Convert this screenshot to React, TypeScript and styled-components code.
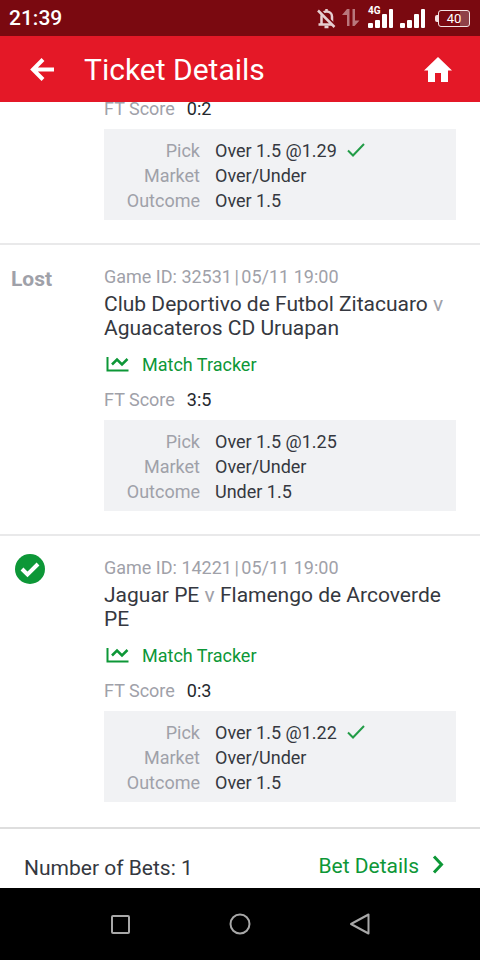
import React from "react";
import styled, { createGlobalStyle } from "styled-components";

const GlobalStyle = createGlobalStyle`
  *, *::before, *::after { box-sizing: border-box; }
  body { margin: 0; background: #fff; }
  body, button { font-family: Roboto, "Liberation Sans", sans-serif; }
`;

const green = "#0d9737";
const muted = "#9fa1a9";
const ink = "#353840";

const Screen = styled.div`
  display: flex;
  flex-direction: column;
  height: 100vh;
  color: ${ink};
  background: #fff;
`;

const StatusBar = styled.div`
  flex: none;
  display: flex;
  align-items: center;
  justify-content: space-between;
  height: 36px;
  padding: 0 9px;
  background: #7a0910;
  color: #fff;
`;

const Clock = styled.time`
  padding-top: 1px;
  font-size: 21px;
  line-height: 35px;
  font-weight: 500;
`;

const StatusIcons = styled.div`
  display: flex;
  align-items: center;
  gap: 6px;
`;

const Network = styled.div`
  position: relative;
  display: flex;
`;

const NetworkLabel = styled.span`
  position: absolute;
  left: 0;
  top: -2px;
  font-size: 10px;
  line-height: 10px;
  font-weight: 700;
`;

const Battery = styled.div`
  position: relative;
  width: 32px;
  height: 17px;
  margin: 0 1px 0 6px;
  border: 1px solid #f3e3e4;
  border-radius: 3px;
  background: linear-gradient(90deg, transparent 70%, #8f4148 70%);
  font-size: 13px;
  line-height: 16px;
  text-align: center;

  &::before {
    content: "";
    position: absolute;
    left: -4px;
    top: 4px;
    width: 3px;
    height: 7px;
    border-radius: 2px 0 0 2px;
    background: #f3e3e4;
  }
`;

const Header = styled.header`
  flex: none;
  display: flex;
  align-items: center;
  height: 66px;
  padding: 2px 28px 0 24px;
  background: #e41827;
  color: #fff;
`;

const IconButton = styled.button`
  display: flex;
  padding: 0;
  border: 0;
  background: none;
  color: inherit;
`;

const BackButton = styled(IconButton)`
  width: 60px;
  padding-left: 6px;
`;

const Title = styled.h1`
  flex: 1;
  margin: 0;
  font-size: 30px;
  line-height: 36px;
  font-weight: 400;
`;

const Content = styled.main`
  flex: 1;
  min-height: 0;
  display: flex;
  flex-direction: column;
  justify-content: flex-end;
  overflow: hidden;
`;

const Entry = styled.article`
  flex: none;
  display: grid;
  grid-template-columns: 104px 1fr;
  padding: 20px 24px 23px 0;
  border-bottom: 2px solid #e9e9ea;

  &:last-of-type {
    padding-bottom: 25px;
    border-bottom-color: #dedede;
  }
`;

const Result = styled.div`
  padding-left: 11px;
  font-size: 21px;
  line-height: 28px;
  font-weight: 700;
  color: ${muted};
`;

const WonMark = styled.div`
  display: flex;
  margin-top: -2px;
  padding: 0 4px;
`;

const Meta = styled.div`
  font-size: 18px;
  line-height: 24px;
  color: ${muted};
`;

const Separator = styled.span`
  margin: 0 -2px;
`;

const Teams = styled.h2`
  margin: 3px -8px 12px 0;
  font-size: 21px;
  line-height: 24px;
  font-weight: 400;
`;

const Versus = styled.span`
  color: ${muted};
`;

const Tracker = styled.a`
  display: flex;
  align-items: center;
  gap: 12px;
  margin-bottom: 10px;
  padding-left: 2px;
  font-size: 18px;
  line-height: 25px;
  color: ${green};
  text-decoration: none;
`;

const Score = styled.div`
  display: flex;
  gap: 12px;
  margin-bottom: 8px;
  font-size: 18px;
  line-height: 25px;
  color: #24272d;
`;

const Label = styled.span`
  color: ${muted};
`;

const Picks = styled.dl`
  display: grid;
  grid-template-columns: 96px 1fr;
  column-gap: 15px;
  margin: 0;
  padding: 9px 0 7px;
  background: #f1f2f4;
  font-size: 18px;
  line-height: 25px;
`;

const Term = styled.dt`
  text-align: right;
  color: ${muted};
`;

const Value = styled.dd`
  display: flex;
  align-items: center;
  gap: 10px;
  margin: 0;
`;

const Summary = styled.section`
  flex: none;
  display: flex;
  align-items: flex-start;
  justify-content: space-between;
  height: 59px;
  padding: 23px 36px 0 24px;
`;

const BetCount = styled.div`
  padding-top: 2px;
  font-size: 21px;
  line-height: 28px;
`;

const DetailsButton = styled(IconButton)`
  align-items: center;
  gap: 13px;
  font-size: 21px;
  line-height: 28px;
  color: ${green};
`;

const NavBar = styled.nav`
  flex: none;
  display: flex;
  align-items: center;
  justify-content: center;
  gap: 96px;
  height: 72px;
  background: #000;
  color: #a8a8a8;
`;

const MuteBell = () => (
  <svg width="19" height="21" viewBox="0 0 19 21" fill="none" stroke="#e6cfd1" strokeWidth="2" aria-hidden="true">
    <path d="M4.500 16V8.500C4.500 5.400 6.400 3.500 9.500 3.500s5.500 1.900 5.500 5V16M1.500 16.500h16" strokeWidth="2.500" />
    <path d="M7.500 19h4M9.500 1v2" strokeWidth="2.500" />
    <path d="M2.500 2l16 16" stroke="#7a0910" strokeWidth="3" />
    <path d="M1 2.500l16.500 16.500" strokeWidth="2.500" />
  </svg>
);

const ArrowsIcon = styled.svg`
  margin-right: 2px;
`;

const DataArrows = () => (
  <ArrowsIcon width="18" height="20" viewBox="0 0 18 20" fill="#b9777c" aria-hidden="true">
    <path d="M5 1h2.500v17H5V7H0z" />
    <path d="M10.500 1H13v11.500h4.500L12.500 18h-2z" />
  </ArrowsIcon>
);

const Bars = ({ label }: { label?: string }) => (
  <Network>
    <svg width="26" height="20" viewBox="0 0 26 20" fill="#fff" aria-hidden="true">
      <rect x="0" y="15" width="5" height="5" rx="1" />
      <rect x="7" y="12" width="5" height="8" rx="1" />
      <rect x="14" y="6" width="5" height="14" rx="1" />
      <rect x="21" y="1" width="4" height="19" rx="1" />
    </svg>
    {label && <NetworkLabel>{label}</NetworkLabel>}
  </Network>
);

const ArrowLeft = () => (
  <svg width="25" height="24" viewBox="0 0 25 24" fill="none" stroke="#fff" strokeWidth="4" aria-hidden="true">
    <path d="M13 1.500L3 11.500l10 10M3.500 11.500H24" />
  </svg>
);

const Home = () => (
  <svg width="28" height="26" viewBox="0 0 28 26" fill="#fff" aria-hidden="true">
    <path d="M14 0l14 13.500h-4V25h-7v-9h-6v9H4V13.500H0z" />
  </svg>
);

const ChartIcon = () => (
  <svg width="24" height="18" viewBox="0 0 24 18" fill="none" stroke={green} strokeWidth="2" aria-hidden="true">
    <path d="M1.500 1v13.500H22.500" />
    <path d="M6 8.500l5-5 5 5L21.500 3" strokeWidth="2.500" />
  </svg>
);

const Tick = () => (
  <svg width="18" height="15" viewBox="0 0 18 15" fill="none" stroke="#229c47" strokeWidth="2" aria-label="Won" role="img">
    <path d="M1 7.500l5 5L17 1" />
  </svg>
);

const WonBadge = () => (
  <svg width="30" height="30" viewBox="0 0 30 30" role="img" aria-label="Won">
    <circle cx="15" cy="15" r="15" fill={green} />
    <path d="M7 15l5.500 5.500L23 10" fill="none" stroke="#fff" strokeWidth="4" />
  </svg>
);

const ChevronRight = () => (
  <svg width="12" height="22" viewBox="0 0 12 22" fill="none" stroke={green} strokeWidth="3" aria-hidden="true">
    <path d="M2 1.500L9.500 9.500 2 17.500" />
  </svg>
);

interface PickInfo {
  score: string;
  odds: string;
  outcome: string;
  won: boolean;
}

const PickDetails = ({ score, odds, outcome, won }: PickInfo) => (
  <>
    <Score>
      <Label>FT Score</Label>
      <span>{score}</span>
    </Score>
    <Picks>
      <Term>Pick</Term>
      <Value>
        Over 1.5 @{odds}
        {won && <Tick />}
      </Value>
      <Term>Market</Term>
      <Value>Over/Under</Value>
      <Term>Outcome</Term>
      <Value>{outcome}</Value>
    </Picks>
  </>
);

interface Game extends PickInfo {
  id: string;
  home: string;
  away: string;
}

const games: Game[] = [
  {
    id: "32531",
    home: "Club Deportivo de Futbol Zitacuaro",
    away: "Aguacateros CD Uruapan",
    score: "3:5",
    odds: "1.25",
    outcome: "Under 1.5",
    won: false,
  },
  {
    id: "14221",
    home: "Jaguar PE",
    away: "Flamengo de Arcoverde PE",
    score: "0:3",
    odds: "1.22",
    outcome: "Over 1.5",
    won: true,
  },
];

export default function App() {
  return (
    <Screen>
      <GlobalStyle />
      <StatusBar>
        <Clock>21:39</Clock>
        <StatusIcons>
          <MuteBell />
          <DataArrows />
          <Bars label="4G" />
          <Bars />
          <Battery>40</Battery>
        </StatusIcons>
      </StatusBar>
      <Header>
        <BackButton type="button" aria-label="Back">
          <ArrowLeft />
        </BackButton>
        <Title>Ticket Details</Title>
        <IconButton type="button" aria-label="Home">
          <Home />
        </IconButton>
      </Header>
      <Content>
        <Entry>
          <div />
          <div>
            <PickDetails score="0:2" odds="1.29" outcome="Over 1.5" won />
          </div>
        </Entry>
        {games.map((game) => (
          <Entry key={game.id}>
            {game.won ? (
              <Result>
                <WonMark>
                  <WonBadge />
                </WonMark>
              </Result>
            ) : (
              <Result>Lost</Result>
            )}
            <div>
              <Meta>
                Game ID: {game.id} <Separator>|</Separator> 05/11 19:00
              </Meta>
              <Teams>
                {game.home} <Versus>v</Versus> {game.away}
              </Teams>
              <Tracker href="#tracker">
                <ChartIcon />
                Match Tracker
              </Tracker>
              <PickDetails {...game} />
            </div>
          </Entry>
        ))}
        <Summary>
          <BetCount>Number of Bets: 1</BetCount>
          <DetailsButton type="button">
            Bet Details
            <ChevronRight />
          </DetailsButton>
        </Summary>
      </Content>
      <NavBar>
        <IconButton type="button" aria-label="Recent apps">
          <svg width="24" height="24" viewBox="0 0 24 24" fill="none" stroke="currentColor" strokeWidth="2">
            <rect x="4" y="4" width="17" height="17" rx="1" />
          </svg>
        </IconButton>
        <IconButton type="button" aria-label="Home screen">
          <svg width="24" height="24" viewBox="0 0 24 24" fill="none" stroke="currentColor" strokeWidth="2">
            <circle cx="12" cy="12" r="9.500" />
          </svg>
        </IconButton>
        <IconButton type="button" aria-label="Previous screen">
          <svg width="24" height="24" viewBox="0 0 24 24" fill="none" stroke="currentColor" strokeWidth="2" strokeLinejoin="round">
            <path d="M20.500 2.500v19L3 12z" />
          </svg>
        </IconButton>
      </NavBar>
    </Screen>
  );
}
